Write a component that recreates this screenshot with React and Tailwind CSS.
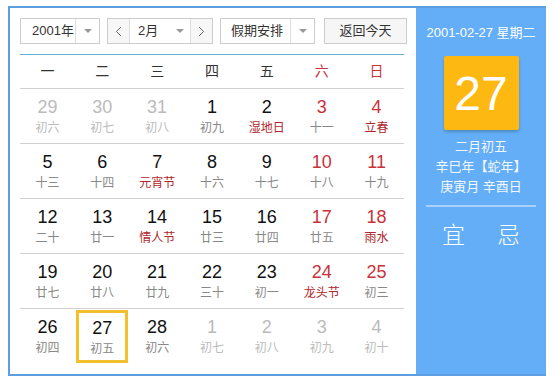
import React from "react";

const weekdays = ["一", "二", "三", "四", "五", "六", "日"];

// o = other month, f = festival / solar term, s = selected
const weeks = [
  [
    { d: 29, l: "初六", o: 1 },
    { d: 30, l: "初七", o: 1 },
    { d: 31, l: "初八", o: 1 },
    { d: 1, l: "初九" },
    { d: 2, l: "湿地日", f: 1 },
    { d: 3, l: "十一" },
    { d: 4, l: "立春", f: 1 },
  ],
  [
    { d: 5, l: "十三" },
    { d: 6, l: "十四" },
    { d: 7, l: "元宵节", f: 1 },
    { d: 8, l: "十六" },
    { d: 9, l: "十七" },
    { d: 10, l: "十八" },
    { d: 11, l: "十九" },
  ],
  [
    { d: 12, l: "二十" },
    { d: 13, l: "廿一" },
    { d: 14, l: "情人节", f: 1 },
    { d: 15, l: "廿三" },
    { d: 16, l: "廿四" },
    { d: 17, l: "廿五" },
    { d: 18, l: "雨水", f: 1 },
  ],
  [
    { d: 19, l: "廿七" },
    { d: 20, l: "廿八" },
    { d: 21, l: "廿九" },
    { d: 22, l: "三十" },
    { d: 23, l: "初一" },
    { d: 24, l: "龙头节", f: 1 },
    { d: 25, l: "初三" },
  ],
  [
    { d: 26, l: "初四" },
    { d: 27, l: "初五", s: 1 },
    { d: 28, l: "初六" },
    { d: 1, l: "初七", o: 1 },
    { d: 2, l: "初八", o: 1 },
    { d: 3, l: "初九", o: 1 },
    { d: 4, l: "初十", o: 1 },
  ],
];

function Caret() {
  return <span className="w-0 h-0 border-x-[4px] border-t-[4px] border-x-transparent border-t-[#999]" />;
}

function Chevron({ dir }) {
  return (
    <svg width="7" height="11" viewBox="0 0 7 11">
      <polyline
        points={dir === "left" ? "6,1 1.5,5.5 6,10" : "1,1 5.5,5.5 1,10"}
        fill="none"
        stroke="#666"
        strokeWidth="1"
      />
    </svg>
  );
}

function DayCell({ day, col }) {
  const weekend = col >= 5;
  let numColor = "text-[#111]";
  if (day.o) numColor = "text-[#bbb]";
  else if (weekend) numColor = "text-[#c9323a]";
  let lunarColor = "text-[#888]";
  if (day.o) lunarColor = "text-[#bbb]";
  else if (day.f) lunarColor = "text-[#b1262c]";

  const inner = (
    <>
      <span className={`text-[18px] leading-[20px] ${numColor}`}>{day.d}</span>
      <span className={`text-[12px] leading-[16px] mt-[3px] ${lunarColor}`}>{day.l}</span>
    </>
  );

  return (
    <div className="flex items-center justify-center h-[54px]">
      {day.s ? (
        <div className="w-[52px] h-[53px] border-[3px] border-[#f3bf2c] flex flex-col items-center pt-[5px]">
          {inner}
        </div>
      ) : (
        <div className="flex flex-col items-center pt-[1px]">{inner}</div>
      )}
    </div>
  );
}

export default function App() {
  return (
    <div className="w-[556px] h-[381px] bg-white pt-[6px] pl-[8px] font-['Liberation_Sans','Noto_Sans_CJK_SC',sans-serif]">
      <div className="flex w-[538px] h-[370px] border-y-2 border-l-2 border-[#5d9de2] border-r-0 bg-[#64aef8]">
        {/* Calendar */}
        <div className="w-[406px] bg-white pl-[10px] pt-[10px]">
          <div className="flex items-center h-[26px] text-[13px] text-[#333]">
            <div className="flex w-[80px] h-[26px] border border-[#ccc]">
              <span className="flex-1 flex items-center pl-[11px]">2001年</span>
              <span className="w-[24px] border-l border-[#ddd] flex items-center justify-center">
                <Caret />
              </span>
            </div>
            <div className="flex ml-[7px] w-[106px] h-[26px] border border-[#ccc]">
              <span className="w-[22px] bg-[#f7f7f7] border-r border-[#ddd] flex items-center justify-center">
                <Chevron dir="left" />
              </span>
              <span className="flex-1 flex items-center pl-[8px]">2月</span>
              <span className="w-[20px] flex items-center justify-center">
                <Caret />
              </span>
              <span className="w-[22px] bg-[#f7f7f7] border-l border-[#ddd] flex items-center justify-center">
                <Chevron dir="right" />
              </span>
            </div>
            <div className="flex ml-[7px] w-[95px] h-[26px] border border-[#ccc]">
              <span className="flex-1 flex items-center pl-[10px]">假期安排</span>
              <span className="w-[24px] border-l border-[#ddd] flex items-center justify-center">
                <Caret />
              </span>
            </div>
            <button className="ml-[9px] w-[83px] h-[26px] border border-[#ccc] bg-[#f6f6f6] text-[13px] text-[#333]">
              返回今天
            </button>
          </div>

          <div className="w-[384px] mt-[10px] border-t border-[#67aed3]">
            <div className="grid grid-cols-7 h-[34px] border-b border-[#d0d0d0] text-[14px]">
              {weekdays.map((w, i) => (
                <div
                  key={w}
                  className={`flex items-center justify-center ${i >= 5 ? "text-[#c9323a]" : "text-[#333]"}`}
                >
                  {w}
                </div>
              ))}
            </div>
            {weeks.map((week, r) => (
              <div
                key={r}
                className={`grid grid-cols-7 h-[55px] ${r < weeks.length - 1 ? "border-b border-[#d0d0d0]" : ""}`}
              >
                {week.map((day, c) => (
                  <DayCell key={c} day={day} col={c} />
                ))}
              </div>
            ))}
          </div>
        </div>

        {/* Side panel */}
        <div className="flex-1 flex flex-col items-center text-white pt-[15px]">
          <div className="text-[13px] leading-[20px]">2001-02-27 星期二</div>
          <div className="mt-[13px] w-[75px] h-[74px] bg-[#fdb812] rounded-[2px] shadow-[0_2px_3px_rgba(0,0,0,0.2)] flex items-center justify-center text-[48px] leading-none pt-[2px]">
            27
          </div>
          <div className="mt-[7px] flex flex-col items-center text-[13px] leading-[20px] text-[#f2f8ff]">
            <span>二月初五</span>
            <span>辛巳年【蛇年】</span>
            <span>庚寅月 辛酉日</span>
          </div>
          <div className="mt-[8px] w-[110px] h-[2px] bg-[#a8d0fb]" />
          <div className="mt-[14px] flex gap-[32px] text-[23px] leading-[28px] font-light">
            <span>宜</span>
            <span>忌</span>
          </div>
        </div>
      </div>
    </div>
  );
}
